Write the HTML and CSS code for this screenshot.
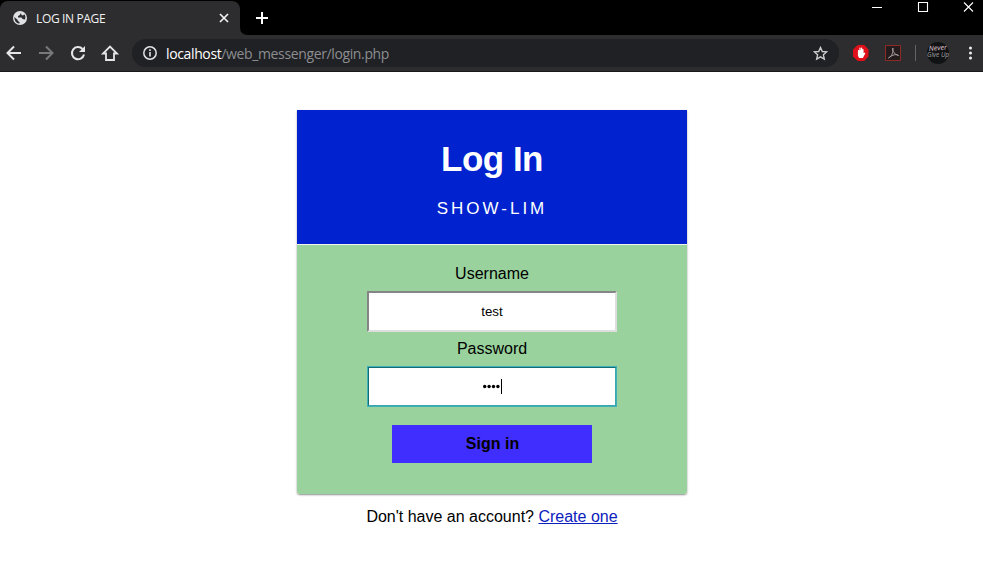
FILE: index.html
```html
<!DOCTYPE html>
<html lang="en">
<head>
<meta charset="utf-8">
<title>LOG IN PAGE</title>
<link rel="stylesheet" href="styles.css">
</head>
<body>
<header class="browser">
  <div class="tabs">
    <div class="tab">
      <svg class="globe" width="14" height="14" viewBox="0 0 14 14"><circle cx="7" cy="7" r="7" fill="#dfe1e4"/><path d="M1.300 6l3.500 3v1l1.700 1v1.500C3.500 12.500 1.300 10 1.300 6zM8 2l-1.500 2.200L5 5v1.500h3.500l1 1.500 2.500.5c.7-1.800.6-3.700-.6-5.200L10 4.500 8.500 4z" fill="#2d2d2f"/></svg>
      <span class="tab-title">LOG IN PAGE</span>
      <svg class="tab-close" width="10" height="10" viewBox="0 0 10 10" stroke="#f1f1f1" stroke-width="1.700"><path d="M1 1l8 8M9 1L1 9"/></svg>
    </div>
    <div class="new-tab">
      <svg class="curve" width="8" height="8" viewBox="0 0 8 8"><path d="M0 0Q0 8 8 8H0z" fill="#2d2d2f"/></svg>
      <svg class="plus" width="12" height="12" viewBox="0 0 12 12" stroke="#fff" stroke-width="2"><path d="M6 0v12M0 6h12"/></svg>
    </div>
    <svg class="window-buttons" width="114" height="14" viewBox="0 0 114 14" fill="none" stroke="#fff" stroke-width="1.100"><path d="M12 7.500h10M104 2.500l9 9M113 2.500l-9 9"/><path d="M58.500 2.500h9v9h-9z"/></svg>
  </div>
  <div class="toolbar">
    <svg class="nav" width="124" height="36" viewBox="0 0 124 36" fill="none" stroke-width="2">
      <path d="M21 18H8M14 11.500L7.500 18l6.500 6.500" stroke="#e6e6e6"/>
      <path d="M39 18h13M46 11.500l6.500 6.500-6.500 6.500" stroke="#77797b"/>
      <path d="M82.500 14A6.100 6.100 0 1 0 84 19.500" stroke="#e6e6e6"/><path d="M85 11v6h-6z" fill="#e6e6e6"/>
      <path d="M106 25h8v-6.500h3L110 11.500 103 18.500h3z" stroke="#e6e6e6" stroke-width="1.800"/>
    </svg>
    <div class="address">
      <svg width="14" height="14" viewBox="0 0 14 14" fill="none" stroke="#e2e3e5"><circle cx="7" cy="7" r="6.200" stroke-width="1.500"/><path d="M7 6v4.500M7 3.300v1.600" stroke-width="1.600"/></svg>
      <span class="url"><b>localhost</b>/web_messenger/login.php</span>
      <svg class="star" width="15" height="15" viewBox="0 0 15 15" fill="none" stroke="#cbcccd" stroke-width="1.400"><path d="M7.500 1.500l1.800 4 4.300.4-3.200 2.900.9 4.300-3.800-2.200-3.800 2.200.9-4.300L1.400 5.900l4.300-.4z"/></svg>
    </div>
    <svg class="extensions" width="144" height="36" viewBox="0 0 144 36">
      <path d="M18.800 10h6.400l4.300 4.600v6.800L25.200 26h-6.400L14 21.400v-6.800z" fill="#e0101a"/>
      <path d="M19.500 15.500v5l1 2h3l2.200-4.300-1.700.8v-4.500M21 18v-5M22.600 18v-5" stroke="#fff" stroke-width="1.200" fill="#fff" stroke-linejoin="round" stroke-linecap="round"/>
      <path d="M46.500 10.500h15v15h-15z" fill="#241b1c" stroke="#8d2a25"/>
      <path d="M49.500 23c3-1.500 5-5.500 4.500-10-1.500.500 0 6 5.500 7.500-2-1.800-6-.8-10 2.500z" fill="none" stroke="#aaa3a5" stroke-width="1"/>
      <path d="M76.500 10v16" stroke="#626365"/>
      <circle cx="99" cy="18" r="11" fill="#111214"/>
      <g class="avatar-text"><text x="90" y="16" textLength="18" lengthAdjust="spacingAndGlyphs" transform="rotate(-5 90 16)">Never</text><text class="dim" x="88" y="22" textLength="22" lengthAdjust="spacingAndGlyphs">Give Up</text></g>
      <g fill="#f0f0f0"><circle cx="131.500" cy="13" r="1.500"/><circle cx="131.500" cy="18" r="1.500"/><circle cx="131.500" cy="23" r="1.500"/></g>
    </svg>
  </div>
</header>
<main>
  <section class="card">
    <div class="card-head"><h1>Log In</h1><p>SHOW-LIM</p></div>
    <form class="card-form">
      <label>Username</label>
      <div class="field">test</div>
      <label>Password</label>
      <div class="field focused">
        <svg width="20" height="15" viewBox="0 0 20 15"><g><circle cx="2.700" cy="7.500" r="1.700"/><circle cx="7.100" cy="7.500" r="1.700"/><circle cx="11.500" cy="7.500" r="1.700"/><circle cx="15.900" cy="7.500" r="1.700"/></g><path d="M19 0h1v15h-1z"/></svg>
      </div>
      <button type="button">Sign in</button>
    </form>
  </section>
  <p class="signup">Don't have an account? <a href="#">Create one</a></p>
</main>
</body>
</html>
```
FILE: styles.css
```css
* { box-sizing: border-box; }
body { margin: 0; background: #fff; color: #000; font: 16px "Liberation Sans", sans-serif; overflow: hidden; }
svg { display: block; flex: none; }
.browser { height: 72px; background: #000; font-family: "Open Sans", sans-serif; }
.tabs { display: flex; height: 35px; padding-top: 1px; }
.tab { display: flex; align-items: center; width: 240px; height: 34px; padding: 0 11px 0 13px; border-radius: 8px 8px 0 0; background: #2d2d2f; color: #f1f1f1; font-size: 12px; }
.tab-title { margin-left: 9px; letter-spacing: -0.35px; white-space: nowrap; }
.tab-close { margin-left: auto; }
.new-tab { display: flex; align-items: flex-end; }
.plus { align-self: center; margin-left: 8px; }
.window-buttons { margin: -1px 9px 0 auto; }
.toolbar { display: flex; align-items: center; height: 37px; background: #2d2d2f; border-bottom: 1px solid #191919; }
.address { display: flex; align-items: center; width: 707px; height: 28px; margin-left: 8px; padding: 0 11px 0 11px; border-radius: 14px; background: #202124; font-size: 14px; }
.url { margin-left: 9px; color: #8c8e91; white-space: nowrap; letter-spacing: -0.37px; }
.url b { color: #fff; font-weight: 400; }
.star { margin-left: auto; }
.avatar-text { fill: #e4d0dc; font: italic 7px "Open Sans", sans-serif; }
.avatar-text .dim { fill: #a5a5a5; }
main { display: flex; flex-direction: column; align-items: center; padding: 38px 0 0 1px; }
.card { width: 390px; border-radius: 0 0 3px 3px; box-shadow: 0 1px 2px rgba(0,0,0,.45); }
.card-head { height: 134px; padding-top: 29px; background: #0023cf; color: #fff; text-align: center; }
h1 { margin: 0; font-size: 35px; line-height: 40px; letter-spacing: -0.5px; }
.card-head p { margin: 20px 0 0; font-size: 17px; line-height: 20px; letter-spacing: 3px; }
.card-form { display: flex; flex-direction: column; align-items: center; height: 250px; padding-top: 19px; border-top: 1px solid #edf7ee; border-radius: 0 0 3px 3px; background: #9ad29d; }
label { height: 20px; line-height: 20px; }
.field { display: flex; align-items: center; justify-content: center; width: 250px; height: 41px; margin: 7px 0; border: 2px solid; border-color: #858585 #dedede #dedede #858585; background: #fff; font-size: 13.333px; }
.focused { border-color: #146d73 #39a6ad #39a6ad #146d73; outline: 1px solid #3fafba; outline-offset: -1px; }
button { width: 200px; height: 38px; margin: 11px 0 0; padding: 0 0 0 1px; border: 0; background: #402eff; color: #000; font: bold 16px "Liberation Sans", sans-serif; }
.signup { margin: 14px 0 0; line-height: 18px; }
.signup a { color: #0b20bd; }
```
